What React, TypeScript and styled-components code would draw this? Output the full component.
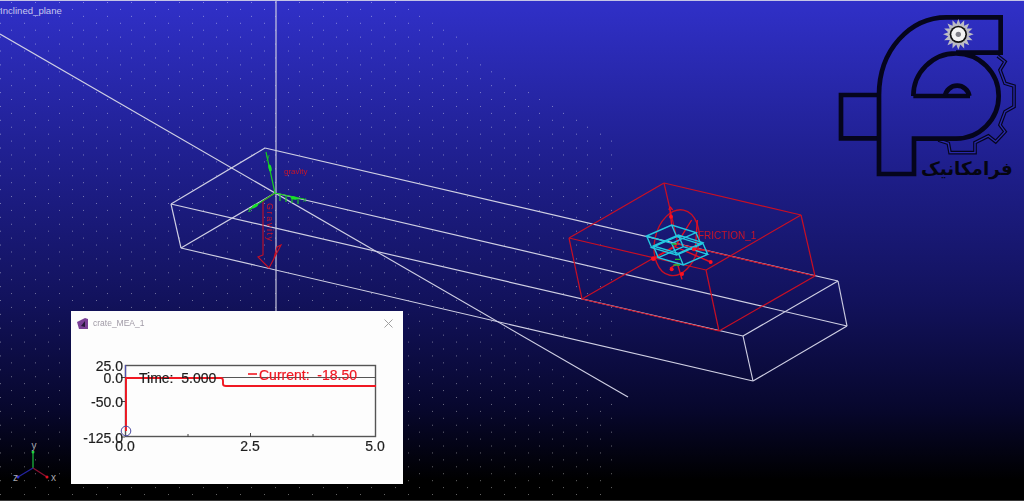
import React from 'react';
import styled, { createGlobalStyle } from 'styled-components';

const GlobalStyle = createGlobalStyle`
  html, body {
    margin: 0;
    padding: 0;
    background: #000;
    font-family: "Liberation Sans", Arial, sans-serif;
  }
`;

const Viewport = styled.div`
  position: relative;
  width: 1024px;
  height: 501px;
  overflow: hidden;
  box-sizing: border-box;
  border-top: 1px solid #c4c4e6;
  border-bottom: 1px solid #3a3a3a;
  background: linear-gradient(180deg, #3030c8 0%, #1f1f8e 32%, #12125c 60%, #07072c 82%, #000 96%);
`;

const SceneCanvas = styled.svg`
  position: absolute;
  left: 0;
  top: -1px;
  width: 1024px;
  height: 501px;
  filter: blur(0.3px);
`;

const ViewTitle = styled.div`
  position: absolute;
  left: 0;
  top: 4px;
  font-size: 9.6px;
  line-height: 12px;
  color: #c6c6ee;
`;

const LogoBox = styled.svg`
  position: absolute;
  left: 830px;
  top: -1px;
  width: 194px;
  height: 190px;
`;

const LogoText = styled.text`
  font-family: "DejaVu Sans", sans-serif;
  font-weight: 700;
  font-size: 55px;
  fill: #050510;
`;

const PlotWindow = styled.div`
  position: absolute;
  left: 71px;
  top: 310px;
  width: 332px;
  height: 173px;
  background: #fdfdfd;
  display: flex;
  flex-direction: column;
  filter: blur(0.35px);
`;

const TitleBar = styled.div`
  height: 24px;
  display: flex;
  align-items: center;
  gap: 4px;
  padding: 0 10px 0 6px;
  color: #a09aa6;
  font-size: 8.5px;
`;

const TitleText = styled.span`
  flex: 1;
`;

const Plot = styled.svg`
  display: block;
  width: 332px;
  height: 149px;
`;

const PlotLabel = styled.text<{ $color?: string }>`
  font-size: 14px;
  fill: ${(p) => p.$color || '#1e1e1e'};
  stroke: ${(p) => p.$color || '#1e1e1e'};
  stroke-width: 0.2px;
  white-space: pre;
`;

const TriadBox = styled.svg`
  position: absolute;
  left: 8px;
  top: 436px;
  width: 56px;
  height: 50px;
`;

const TriadLabel = styled.text`
  font-size: 10px;
  fill: #a8a8b0;
`;

const SceneLabel = styled.text<{ $size?: number }>`
  font-size: ${(p) => p.$size || 8}px;
  fill: #c8142a;
`;

const GreenLabel = styled.text`
  font-size: 7px;
  fill: #18c820;
`;

const dots: { x: number; y: number }[] = [];
for (let row = 0; row < 72; row++) {
  const y = 2 + row * 6.93;
  const start = row % 2 === 0 ? 11 : 0;
  for (let x = start; x <= 622; x += 24) {
    if (x > 396 + 1.65 * y) continue;
    if (y > 340 && y < 407 && x > 585 + (y - 386) * 1.75) continue;
    dots.push({ x, y });
  }
}

const whiteLines = [
  [0, 34, 628, 397],
  [276, 0, 276, 312],
  [265, 148, 171, 204],
  [171, 204, 181, 248],
  [181, 248, 275, 193],
  [265, 148, 838, 281],
  [275, 193, 847, 326],
  [171, 204, 743, 336],
  [181, 248, 753, 381],
  [838, 281, 847, 326],
  [847, 326, 753, 381],
  [753, 381, 743, 336],
  [743, 336, 838, 281],
];

const redLines = [
  [569, 238, 664, 183],
  [664, 183, 801, 215],
  [801, 215, 706, 270],
  [569, 238, 706, 270],
  [706, 270, 719, 331],
  [569, 238, 582, 299],
  [582, 299, 719, 331],
  [719, 331, 815, 276],
  [801, 215, 815, 276],
  [664, 183, 678, 244],
  [582, 299, 678, 244],
  [678, 244, 815, 276],
];

// friction marker, drawn in a 3x grid: two overlapping wire blocks
const blockPath = (dx: number, dy: number) => {
  const top = [[80, 108], [155, 75], [228, 98], [155, 130]].map(([x, y]) => [x + dx, y + dy]);
  const low = top.map(([x, y]) => [x + 15, y + 35]);
  const ring = (p: number[][]) => `M${p.map((q) => q.join(' ')).join(' L')} Z`;
  const edges = top.map((q, i) => `M${q.join(' ')} L${low[i].join(' ')}`).join(' ');
  return `${ring(top)} ${ring(low)} ${edges}`;
};

const frictionRed = [
  'M150 28 L155 75',
  'M150 20 L147 30 M150 20 L158 30',
  'M100 176 L165 140 L215 60',
  'M165 140 L272 186',
  'M150 205 L172 190 L186 238',
  'M232 60 L226 150',
  'M226 150 L262 150',
];

const gearTeeth = Array.from({ length: 16 }, (_, i) => {
  const a = (i / 16) * Math.PI * 2;
  const b = ((i + 0.5) / 16) * Math.PI * 2;
  return `${385 + 46 * Math.cos(a)},${103 + 46 * Math.sin(a)} ${385 + 31 * Math.cos(b)},${103 + 31 * Math.sin(b)}`;
}).join(' ');

const gearEdge =
  'M503 168 L525 185 L510 210 L525 250 L552 258 L552 320 L525 335 L510 375 L525 395 L497 425 L475 408 L435 428 L435 458 L360 458 L355 430 L325 420';

function Scene() {
  return (
    <SceneCanvas viewBox="0 0 1024 501">
      {dots.map((d) => (
        <rect key={`${d.x}-${d.y}`} x={d.x} y={d.y} width={1} height={1} fill="#fff" opacity={0.4} />
      ))}
      {whiteLines.map((l, i) => (
        <line key={i} x1={l[0]} y1={l[1]} x2={l[2]} y2={l[3]} stroke="#d0d0e4" strokeWidth={1.15} />
      ))}
      {redLines.map((l, i) => (
        <line key={i} x1={l[0]} y1={l[1]} x2={l[2]} y2={l[3]} stroke="#c80f24" strokeWidth={1.2} />
      ))}

      {/* gravity marker */}
      <path d="M275 193 L263 201 V255 L258 257 L269 268 L281 245 L277 247 L274 258" fill="none" stroke="#c80f24" strokeWidth={1.1} />
      <SceneLabel x={284} y={174}>gravity</SceneLabel>
      <SceneLabel x={267} y={203} $size={9} transform="rotate(90 267 203)" style={{ letterSpacing: '1.6px' }}>Gravity</SceneLabel>
      <g stroke="#18c820" fill="none" strokeWidth={1.2}>
        <path d="M266 152 L275 193 L304 199" />
        <path d="M275 193 L249 210" />
        <path d="M280 195 V201 M286 196 V202 M292 197 V203 M298 198 V204" />
      </g>
      <g fill="#18e028">
        <ellipse cx={270} cy={168} rx={1.6} ry={3.5} transform="rotate(-12 270 168)" />
        <ellipse cx={294} cy={198} rx={3.5} ry={1.6} transform="rotate(12 294 198)" />
        <ellipse cx={255} cy={206} rx={3.5} ry={1.6} transform="rotate(-32 255 206)" />
      </g>
      <GreenLabel x={266} y={159}>y</GreenLabel>
      <GreenLabel x={303} y={202}>x</GreenLabel>
      <GreenLabel x={248} y={212}>z</GreenLabel>

      {/* friction marker */}
      <g transform="translate(620 200) scale(0.3333)" fill="none" strokeWidth={4.2}>
        <ellipse cx={170} cy={128} rx={66} ry={100} stroke="#c81024" transform="rotate(12 170 128)" />
        {frictionRed.map((d, i) => (
          <path key={i} d={d} stroke="#e01024" />
        ))}
        <path d={blockPath(0, 0)} stroke="#22c8e0" />
        <path d={blockPath(20, 30)} stroke="#22c8e0" />
        <path d="M160 195 H180 M165 178 H182 M155 132 H170" stroke="#20c030" />
        <g fill="#ff1020" stroke="none">
          <circle cx={100} cy={176} r={7} />
          <circle cx={153} cy={50} r={6} />
          <circle cx={272} cy={186} r={6} />
          <circle cx={222} cy={148} r={6} />
          <circle cx={155} cy={208} r={6} />
          <circle cx={186} cy={222} r={6} />
        </g>
      </g>
      <SceneLabel x={698} y={239} $size={10}>FRICTION_1</SceneLabel>
    </SceneCanvas>
  );
}

function Logo() {
  return (
    <LogoBox viewBox="0 0 582 570">
      <path d={gearEdge} fill="none" stroke="#05051c" strokeWidth={11} />
      <path d={gearEdge} fill="none" stroke="#2828ac" strokeWidth={4} />
      <g fill="none" stroke="#05051c" strokeWidth={14}>
        <path d="M147 285 H33 V415 H147" />
        <path d="M250 288 A128 128 0 0 1 378 160 A128 128 0 1 1 378 416 H252 V522 H147 V285 C147 150 240 52 350 52 H512 V158 H378" />
        <path d="M250 288 H420" />
        <path d="M345 288 A37 37 0 0 1 418 288" />
      </g>
      <polygon points={gearTeeth} fill="#bcbcc4" />
      <circle cx={385} cy={103} r={26} fill="#111" />
      <circle cx={385} cy={103} r={21} fill="#f4f4f4" />
      <circle cx={385} cy={103} r={8} fill="#808088" />
      <LogoText x={548} y={524} textAnchor="start" direction="rtl">فرامکانیک</LogoText>
    </LogoBox>
  );
}

function PlotPanel() {
  return (
    <PlotWindow>
      <TitleBar>
        <svg width="12" height="13" viewBox="0 0 12 13">
          <path d="M0 5 L8 1 L11 2 V12 H2 Z" fill="#7a3f96" />
          <path d="M4 9 L8 4 V10 Z" fill="#26183a" />
        </svg>
        <TitleText>crate_MEA_1</TitleText>
        <svg width="9" height="9" viewBox="0 0 9 9">
          <path d="M0.5 0.5 L8.5 8.5 M8.5 0.5 L0.5 8.5" stroke="#a0a0a0" fill="none" />
        </svg>
      </TitleBar>
      <Plot viewBox="0 0 332 149">
        <rect x={54.5} y={30.5} width={250} height={71} fill="none" stroke="#555" strokeWidth={1.4} />
        <line x1={54.5} y1={42.5} x2={304.5} y2={42.5} stroke="#555" strokeWidth={1.2} />
        <line x1={54.5} y1={30} x2={54.5} y2={42} stroke="#5050b0" strokeWidth={1.2} />
        <path d="M50 42.5 H54 M50 66.5 H54 M50 102 H54 M117 99 V102 M242 99 V102 M179.5 98 V102" stroke="#444" />
        <path d="M55 96 V43 H150 Q152 43 152 46 V49 Q152 51 155 51 H305" fill="none" stroke="#f01822" strokeWidth={1.9} />
        <circle cx={55} cy={96} r={4.8} fill="none" stroke="#4a4aa0" />
        <line x1={177} y1={39} x2={186} y2={39} stroke="#f01822" strokeWidth={1.6} />
        <PlotLabel x={68} y={48}>Time:  5.000</PlotLabel>
        <PlotLabel x={188} y={45} $color="#f01822">Current:  -18.50</PlotLabel>
        <PlotLabel x={52} y={36} textAnchor="end">25.0</PlotLabel>
        <PlotLabel x={52} y={48} textAnchor="end">0.0</PlotLabel>
        <PlotLabel x={52} y={72} textAnchor="end">-50.0</PlotLabel>
        <PlotLabel x={52} y={108} textAnchor="end">-125.0</PlotLabel>
        <PlotLabel x={54} y={116} textAnchor="middle">0.0</PlotLabel>
        <PlotLabel x={179} y={116} textAnchor="middle">2.5</PlotLabel>
        <PlotLabel x={304} y={116} textAnchor="middle">5.0</PlotLabel>
      </Plot>
    </PlotWindow>
  );
}

function Triad() {
  return (
    <TriadBox viewBox="0 0 56 50">
      <path d="M25 31 V15" stroke="#18a838" strokeWidth={1.4} />
      <path d="M25 31 L39 40" stroke="#8c1030" strokeWidth={1.4} />
      <path d="M25 31 L10 40" stroke="#2424a0" strokeWidth={1.4} />
      <circle cx={25} cy={15} r={1.5} fill="#20d040" />
      <circle cx={39} cy={40} r={1.5} fill="#e01020" />
      <circle cx={10} cy={40} r={1.5} fill="#2830d0" />
      <TriadLabel x={23.5} y={12}>y</TriadLabel>
      <TriadLabel x={43} y={44}>x</TriadLabel>
      <TriadLabel x={5} y={44}>z</TriadLabel>
    </TriadBox>
  );
}

function App() {
  return (
    <Viewport>
      <GlobalStyle />
      <Scene />
      <ViewTitle>Inclined_plane</ViewTitle>
      <Logo />
      <PlotPanel />
      <Triad />
    </Viewport>
  );
}

export default App;
